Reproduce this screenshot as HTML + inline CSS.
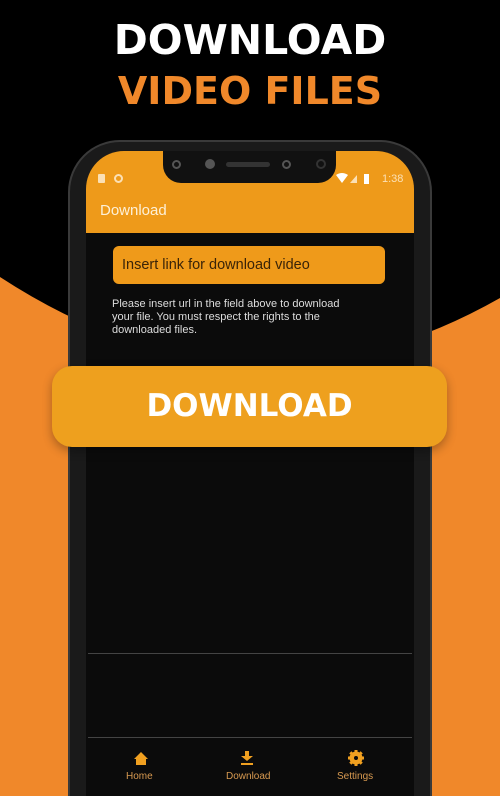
<!DOCTYPE html>
<html><head><meta charset="utf-8"><style>
*{margin:0;padding:0;box-sizing:border-box}
html,body{width:500px;height:796px;overflow:hidden}
body{background:#000;position:relative;font-family:"Liberation Sans",sans-serif}
.abs{position:absolute}
.t{left:0;width:500px;text-align:center;font-weight:bold;font-family:"DejaVu Sans","Liberation Sans",sans-serif}
</style></head><body>
<svg class="abs" style="left:0;top:0" width="500" height="796"><path d="M0,277 Q250,440 500,298 L500,796 L0,796Z" fill="#f0882a"/></svg>
<div class="abs t" style="top:16px;color:#fff;font-size:41px">DOWNLOAD</div>
<div class="abs t" style="top:69px;color:#f0882a;font-size:38px">VIDEO FILES</div>
<!-- phone -->
<div class="abs" style="left:68px;top:140px;width:364px;height:656px;background:#1a1a1a;border-radius:52px 52px 0 0;border:2px solid #3a3a3a;border-bottom:0"></div>
<div class="abs" style="left:86px;top:151px;width:328px;height:645px;background:#0b0b0b;border-radius:38px 38px 0 0;overflow:hidden">
 <div class="abs" style="left:0;top:0;width:328px;height:82px;background:#ee9a1a"></div>
 <div class="abs" style="left:77px;top:0;width:173px;height:32px;background:#111;border-radius:0 0 18px 18px"></div>
 <div class="abs" style="left:86px;top:9px;width:9px;height:9px;border:2px solid #555;border-radius:50%"></div>
 <div class="abs" style="left:119px;top:8px;width:10px;height:10px;background:#555;border-radius:50%"></div>
 <div class="abs" style="left:140px;top:11px;width:44px;height:5px;background:#333;border-radius:3px"></div>
 <div class="abs" style="left:196px;top:9px;width:9px;height:9px;border:2px solid #555;border-radius:50%"></div>
 <div class="abs" style="left:230px;top:8px;width:10px;height:10px;border:2px solid #333;border-radius:50%"></div>
 <div class="abs" style="left:12px;top:23px;width:7px;height:9px;background:#fbe0b5;border-radius:1px"></div>
 <div class="abs" style="left:28px;top:23px;width:9px;height:9px;border:2px solid #fbe0b5;border-radius:50%"></div>
 <svg class="abs" style="left:250px;top:22px" width="40" height="12"><path d="M0,2 Q6,-2 12,2 L6,10Z" fill="#fff"/><path d="M14,10 L21,2 L21,10Z" fill="#fbe0b5"/><rect x="28" y="1" width="5" height="10" fill="#fff"/></svg>
 <div class="abs" style="left:296px;top:22px;font-size:11px;color:#fbe0b5">1:38</div>
 <div class="abs" style="left:14px;top:51px;font-size:15px;color:#fdf0d8">Download</div>
 <div class="abs" style="left:27px;top:95px;width:272px;height:38px;background:#ef9a1a;border-radius:6px;font-size:14.5px;color:#3a2408;padding:11px 0 0 9px">Insert link for download video</div>
 <div class="abs" style="left:26px;top:147px;font-size:11px;line-height:13px;color:#ddd;white-space:nowrap">Please insert url in the field above to download<br>your file. You must respect the rights to the<br>downloaded files.</div>
 <div class="abs" style="left:2px;top:502px;width:324px;height:1px;background:#444"></div>
 <div class="abs" style="left:2px;top:586px;width:324px;height:1px;background:#444"></div>
 <svg class="abs" style="left:47px;top:600px" width="16" height="15"><path d="M8,1 L1,8 L3,8 L3,14 L13,14 L13,8 L15,8Z" fill="#f0a020"/></svg>
 <svg class="abs" style="left:154px;top:599px" width="14" height="16"><path d="M5,1 H9 V6 H13 L7,11 L1,6 H5Z" fill="#f0a020"/><rect x="1" y="13" width="12" height="2" fill="#f0a020"/></svg>
 <svg class="abs" style="left:262px;top:599px" width="16" height="16"><circle cx="8" cy="8" r="5" fill="none" stroke="#f0a020" stroke-width="3"/><path d="M8,0V16M0,8H16M2.3,2.3L13.7,13.7M13.7,2.3L2.3,13.7" stroke="#f0a020" stroke-width="3"/><circle cx="8" cy="8" r="2" fill="#0b0b0b"/></svg>
 <div class="abs" style="left:40px;top:620px;font-size:10px;color:#d89a50">Home</div>
 <div class="abs" style="left:140px;top:620px;font-size:10px;color:#d89a50">Download</div>
 <div class="abs" style="left:251px;top:620px;font-size:10px;color:#d89a50">Settings</div>
</div>
<div class="abs" style="left:52px;top:366px;width:395px;height:81px;background:#eea01e;border-radius:20px;box-shadow:0 4px 10px rgba(0,0,0,.3);color:#fff;font-family:'DejaVu Sans','Liberation Sans',sans-serif;font-weight:bold;font-size:31px;text-align:center;line-height:81px">DOWNLOAD</div>
</body></html>
